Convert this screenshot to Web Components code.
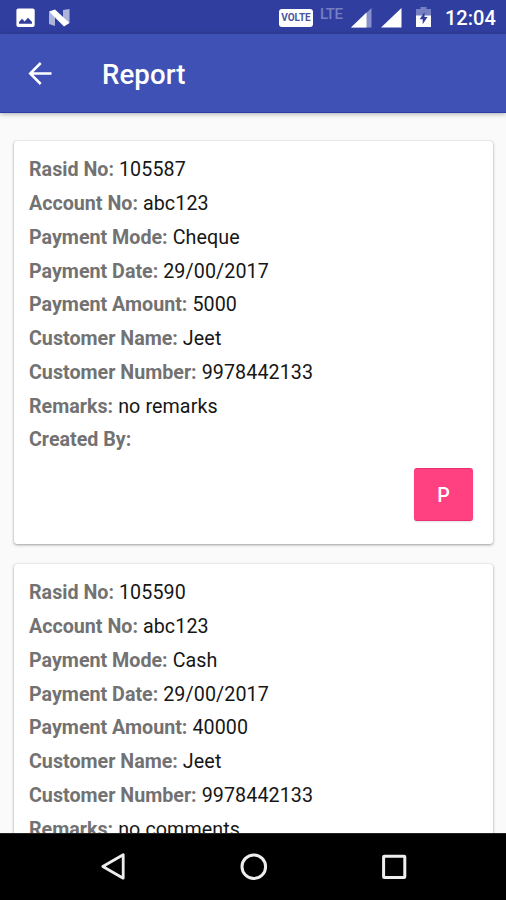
<!DOCTYPE html>
<html lang="en">
<head>
<meta charset="utf-8">
<title>Report</title>
<style>
html,body{margin:0;height:100%;overflow:hidden;background:#fafafa}
body{font-family:Roboto,"Noto Sans",sans-serif}
</style>
</head>
<body>
<report-app></report-app>
<script>
function define(name, html) {
  const t = document.createElement('template');
  t.innerHTML = html;
  customElements.define(name, class extends HTMLElement {
    constructor() {
      super();
      this.attachShadow({mode: 'open'}).append(t.content.cloneNode(true));
    }
  });
}

define('status-bar', `
<style>
:host{display:flex;align-items:center;height:34px;box-sizing:border-box;padding:1px 11px 0 16px;background:#303f9f;color:#fff}
svg{display:block;flex:none}
.photo{margin-right:14px}
.volte{margin-left:auto;width:34px;height:18px;box-sizing:border-box;border-radius:3px;background:#fff;color:#4a559f;font:700 10px/18px Roboto,sans-serif;text-align:center}
.lte{margin:-8px 6px 0 7px;width:25px;color:#7680c2;font:500 15px/18px Roboto,sans-serif;letter-spacing:-.4px}
.s1{margin-right:9px}.s2{margin-right:14px}
.bat{margin-right:14px}
time{width:50px;text-align:right;white-space:nowrap;font:500 20px/26px Roboto,sans-serif}
</style>
<svg class="photo" width="19" height="20" viewBox="0 0 19 20"><rect x=".4" y=".5" width="18.3" height="18.5" rx="2" fill="#fff"/><path d="M3 15.7V14l3-3.2 2.6 2.6L12 9.8l4 4.2v1.7z" fill="#303f9f"/></svg>
<svg width="21" height="18" viewBox="0 0 21 18"><path d="M0 3 6 6v11l-6-2z" fill="#adb4dc"/><path d="M14 1 20.5 0v14L14 11z" fill="#adb4dc"/><path d="M0 2.5 6 .5 20.5 14 15 17.5z" fill="#fff"/></svg>
<span class="volte">VOLTE</span>
<span class="lte">LTE</span>
<svg class="s1" width="21" height="20" viewBox="0 0 21 20"><path d="M0 19.5 20.5 0v19.5z" fill="#8790cb"/><path d="M0 19.5 15.5 4.5v15z" fill="#fff"/></svg>
<svg class="s2" width="21" height="20" viewBox="0 0 21 20"><path d="M0 19.5 20.5 0v19.5z" fill="#fff"/></svg>
<svg class="bat" width="15" height="21" viewBox="0 0 15 21"><path d="M4.5 0h6v2H15v7H0V2h4.5z" fill="#7680c2"/><path d="M0 8.5h15V20H0z" fill="#fff"/><path d="M8.5 5 3.7 12.2h3v5L11.5 10h-3z" fill="#303f9f"/></svg>
<time>12:04</time>`);

define('app-bar', `
<style>
:host{display:flex;align-items:center;height:79px;box-sizing:border-box;padding:0 28px;gap:50px;background:#3f51b5;color:#fff;border-bottom:1px solid #263ea5;box-shadow:0 1px 5px rgba(0,0,0,.32);position:relative;z-index:1}
svg{display:block}
h1{margin:4px 0 0;font:500 27.6px/36px Roboto,sans-serif;letter-spacing:.1px}
</style>
<svg width="24" height="24" viewBox="0 0 24 24" fill="none" stroke="#fff" stroke-width="2.5"><path d="M23.5 12.5H3M12.7 2 2.2 12.5 12.7 23"/></svg>
<h1><slot></slot></h1>`);

define('field-row', `
<style>
:host{display:block;height:33.75px;font:400 19.68px/33.75px Roboto,sans-serif;letter-spacing:.1px;color:#161616;white-space:nowrap}
b{font-weight:700;letter-spacing:0;color:#727272}
</style>
<b><slot name="label"></slot></b> <slot></slot>`);

define('pay-button', `
<style>
:host{display:block}
button{display:block;width:59px;height:53px;padding:0;border:1px solid #ff4081;border-top-color:#ea2f75;border-bottom-color:#ea2f75;border-radius:3px;background:#ff4081;color:#fff;font:500 19.68px/53px Roboto,sans-serif;box-shadow:0 1px 2px rgba(0,0,0,.12)}
</style>
<button><slot></slot></button>`);

define('receipt-card', `
<style>
:host{display:flex;flex-direction:column;flex:none;height:403px;box-sizing:border-box;padding:12.4px 20px 0 15px;border-radius:3px;background:#fff;box-shadow:0 1px 3px rgba(0,0,0,.36),0 0 1px rgba(0,0,0,.2)}
.act{display:flex;justify-content:flex-end;margin-top:11px}
</style>
<slot></slot><div class="act"><slot name="action"></slot></div>`);

define('nav-bar', `
<style>
:host{display:flex;justify-content:space-between;align-items:center;height:67px;box-sizing:border-box;padding:0 98px 0 99px;background:#000;position:relative;z-index:1;border-top:1px solid #222}
svg{display:block}
</style>
<svg width="28" height="32" viewBox="0 0 28 32" fill="none" stroke="#eee" stroke-width="2.8" stroke-linejoin="round"><path d="M3.8 15.5 24.2 3.8v23.4z"/></svg>
<svg width="28" height="32" viewBox="0 0 28 32" fill="none" stroke="#eee" stroke-width="3"><circle cx="13.8" cy="15.7" r="11.8"/></svg>
<svg width="28" height="32" viewBox="0 0 28 32" fill="none" stroke="#eee" stroke-width="3"><rect x="3.6" y="5.2" width="21.2" height="21.2" rx=".7"/></svg>`);

define('report-app', `
<style>
:host{display:flex;flex-direction:column;height:900px;width:506px;background:#fafafa}
main{flex:1;min-height:0;overflow:hidden;display:flex;flex-direction:column;gap:20px;padding:28px 13px 0 14px}
</style>
<status-bar></status-bar>
<app-bar>Report</app-bar>
<main></main>
<nav-bar></nav-bar>`);

const records = [
  [['Rasid No:','105587'],['Account No:','abc123'],['Payment Mode:','Cheque'],['Payment Date:','29/00/2017'],['Payment Amount:','5000'],['Customer Name:','Jeet'],['Customer Number:','9978442133'],['Remarks:','no remarks'],['Created By:','']],
  [['Rasid No:','105590'],['Account No:','abc123'],['Payment Mode:','Cash'],['Payment Date:','29/00/2017'],['Payment Amount:','40000'],['Customer Name:','Jeet'],['Customer Number:','9978442133'],['Remarks:','no comments']]
];
const main = document.querySelector('report-app').shadowRoot.querySelector('main');
records.forEach((rows, i) => {
  const card = document.createElement('receipt-card');
  for (const [label, value] of rows) {
    const row = document.createElement('field-row');
    const l = document.createElement('span');
    l.slot = 'label';
    l.textContent = label;
    row.append(l, value);
    card.append(row);
  }
  if (i === 0) {
    const btn = document.createElement('pay-button');
    btn.slot = 'action';
    btn.textContent = 'P';
    card.append(btn);
  }
  main.append(card);
});
</script>
</body>
</html>
